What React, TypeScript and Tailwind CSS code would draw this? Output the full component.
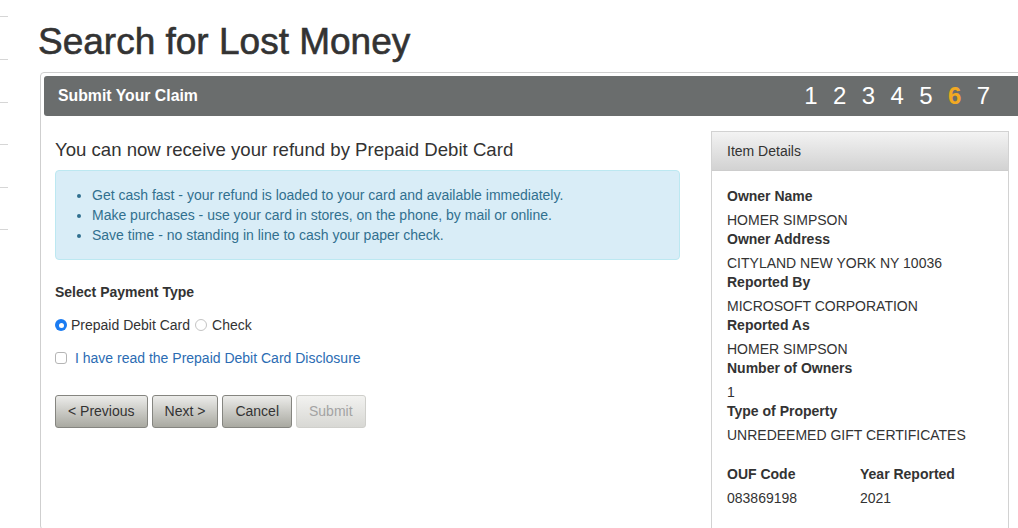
const sideLines = [17, 43, 43, 42, 43, 42]

const steps = [1, 2, 3, 4, 5, 6, 7]
const currentStep = 6

const details = [
  { label: 'Owner Name', value: 'HOMER SIMPSON' },
  { label: 'Owner Address', value: 'CITYLAND NEW YORK NY 10036' },
  { label: 'Reported By', value: 'MICROSOFT CORPORATION' },
  { label: 'Reported As', value: 'HOMER SIMPSON' },
  { label: 'Number of Owners', value: '1' },
  { label: 'Type of Property', value: 'UNREDEEMED GIFT CERTIFICATES' },
]

const perks = [
  'Get cash fast - your refund is loaded to your card and available immediately.',
  'Make purchases - use your card in stores, on the phone, by mail or online.',
  'Save time - no standing in line to cash your paper check.',
]

function Radio({ checked, className = '' }: { checked?: boolean; className?: string }) {
  return checked ? (
    <span
      className={`flex size-[12px] shrink-0 items-center justify-center rounded-full bg-[#1b7cf2] ${className}`}
    >
      <span className="size-[5px] rounded-full bg-white" />
    </span>
  ) : (
    <span
      className={`block size-[12px] shrink-0 rounded-full border border-[#c4c4c4] bg-white ${className}`}
    />
  )
}

function Button({ children, disabled }: { children: React.ReactNode; disabled?: boolean }) {
  return (
    <button
      type="button"
      className={
        disabled
          ? 'h-[33px] rounded-[3px] border border-[#cfcfcb] bg-gradient-to-b from-[#f2f2f0] to-[#d8d8d4] px-[12px] text-[14px] text-[#a3a3a3]'
          : 'h-[33px] rounded-[3px] border border-[#858580] bg-gradient-to-b from-[#ececea] to-[#a9a9a1] px-[12px] text-[14px] text-[#333]'
      }
    >
      {children}
    </button>
  )
}

function Detail({ label, value }: { label: string; value: string }) {
  return (
    <div>
      <div className="mb-[5px] leading-[20px] font-bold">{label}</div>
      <div className="leading-[18px]">{value}</div>
    </div>
  )
}

export default function App() {
  return (
    <div className="flex h-[528px] w-[1018px] overflow-hidden bg-white font-['Liberation_Sans',Arial,sans-serif] text-[#333]">
      {/* clipped nav on the far left */}
      <div className="flex w-[8px] shrink-0 flex-col">
        {sideLines.map((h, i) => (
          <div key={i} className="shrink-0 border-b border-[#d6d6d6]" style={{ height: h }} />
        ))}
      </div>

      <main className="ml-[30px] flex shrink-0 flex-col">
        <h1 className="pt-[20px] text-[37px] leading-[44px] font-normal text-[#333] [-webkit-text-stroke:0.6px_#333]">
          Search for Lost Money
        </h1>

        <section className="mt-[8px] ml-[2px] w-[990px] rounded-[4px] border border-[#cfcfcf] p-[3px] pb-0">
          <div className="flex h-[40px] items-center justify-between rounded-[3px] bg-[#6a6d6d] pr-[36px] pl-[14px]">
            <h2 className="text-[15.8px] font-bold text-white">Submit Your Claim</h2>
            <ol className="flex gap-[15.4px] text-[24px] leading-none text-white">
              {steps.map((n) => (
                <li key={n} className={n === currentStep ? 'font-bold text-[#f2a922]' : ''}>
                  {n}
                </li>
              ))}
            </ol>
          </div>

          <div className="flex pl-[11px]">
            <div className="w-[625px] shrink-0">
              <h3 className="mt-[22px] text-[18.6px] leading-[24px] text-[#333]">
                You can now receive your refund by Prepaid Debit Card
              </h3>
              <div className="mt-[8px] rounded-[4px] border border-[#bce8f1] bg-[#d9edf7] py-[14px] pl-[15px] text-[14px] leading-[20px] text-[#31708f]">
                <ul className="list-disc pl-[21px]">
                  {perks.map((p) => (
                    <li key={p}>{p}</li>
                  ))}
                </ul>
              </div>

              <p className="mt-[22px] text-[14px] leading-[20px] font-bold">Select Payment Type</p>

              <div className="mt-[13px] flex items-center text-[14px] leading-[20px]">
                <Radio checked />
                <span className="ml-[4px]">Prepaid Debit Card</span>
                <Radio className="ml-[5px]" />
                <span className="ml-[5px]">Check</span>
              </div>

              <label className="mt-[13px] flex items-center text-[14px] leading-[20px]">
                <span className="size-[12px] shrink-0 rounded-[3px] border border-[#b5b5b5] bg-white" />
                <a className="ml-[8px] text-[#2b6cb3]">I have read the Prepaid Debit Card Disclosure</a>
              </label>

              <div className="mt-[27px] flex gap-[4px]">
                <Button>&lt; Previous</Button>
                <Button>Next &gt;</Button>
                <Button>Cancel</Button>
                <Button disabled>Submit</Button>
              </div>
            </div>

            <aside className="mt-[15px] ml-[31px] h-[398px] w-[298px] shrink-0 border border-[#d2d2d2]">
              <div className="flex h-[39px] items-center border-b border-[#cdcdcd] bg-gradient-to-b from-[#f3f3f3] to-[#d2d2d2] px-[15px] text-[14px]">
                Item Details
              </div>
              <div className="px-[15px] pt-[15px] text-[14px]">
                {details.map((d) => (
                  <Detail key={d.label} {...d} />
                ))}
                <div className="mt-[20px] grid grid-cols-[133px_1fr]">
                  <Detail label="OUF Code" value="083869198" />
                  <Detail label="Year Reported" value="2021" />
                </div>
              </div>
            </aside>
          </div>
        </section>
      </main>
    </div>
  )
}
